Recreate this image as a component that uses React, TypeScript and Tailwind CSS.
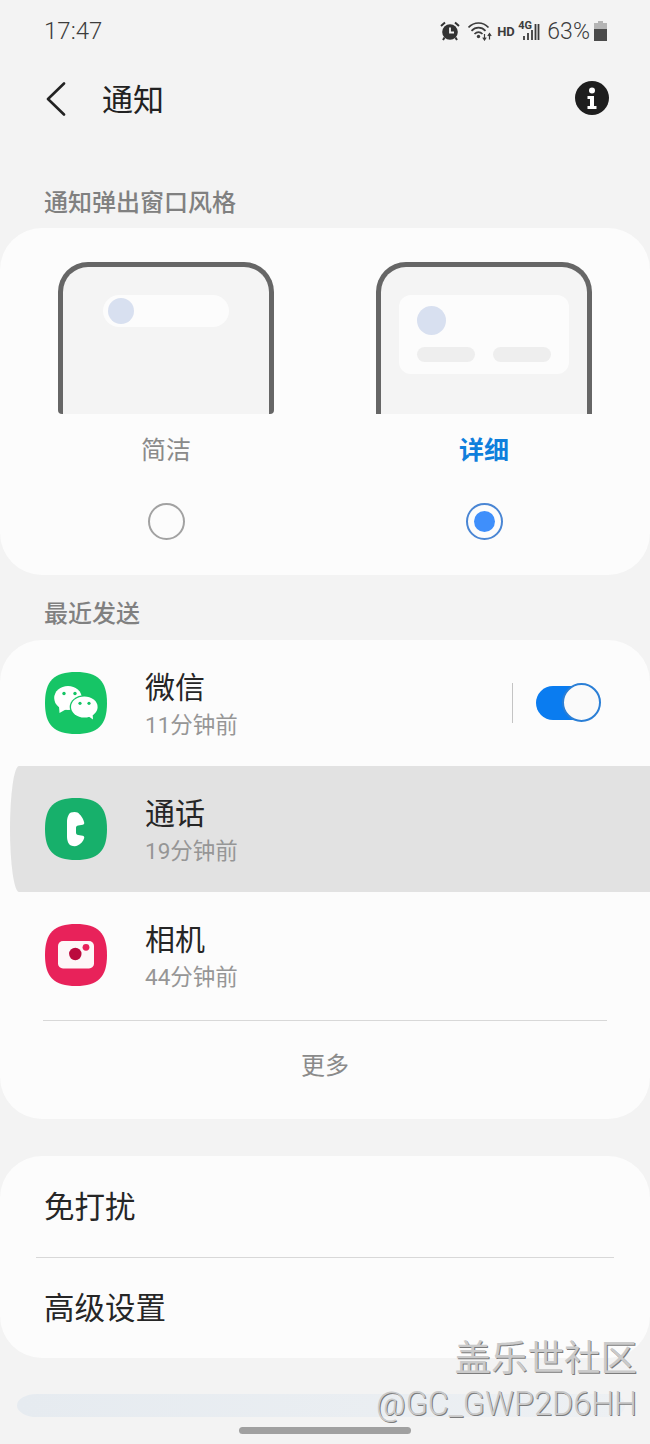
import React from "react";

const CJK = "font-['Noto_Sans_CJK_SC','Noto_Sans',sans-serif]";

const squircle = "M31 0C53 0 62 9 62 31C62 53 53 62 31 62C9 62 0 53 0 31C0 9 9 0 31 0Z";

function WeChatIcon() {
  return (
    <svg width="62" height="62" viewBox="0 0 62 62" className="shrink-0">
      <path d={squircle} fill="#16c566" />
      <ellipse cx="23" cy="26" rx="13.8" ry="12" fill="#fff" />
      <path d="M14 34l0.5 7 7-4z" fill="#fff" />
      <circle cx="19" cy="21.5" r="1.7" fill="#16c566" />
      <circle cx="30" cy="21.5" r="1.7" fill="#16c566" />
      <ellipse cx="39.3" cy="35" rx="14.6" ry="11.8" fill="#16c566" />
      <ellipse cx="39.3" cy="35" rx="13.3" ry="10.5" fill="#fff" />
      <path d="M43 44l5 3.5-0.5-6.5z" fill="#fff" />
      <circle cx="35" cy="31.3" r="1.6" fill="#16c566" />
      <circle cx="44" cy="31.3" r="1.6" fill="#16c566" />
    </svg>
  );
}

function PhoneIcon() {
  return (
    <svg width="62" height="62" viewBox="0 0 62 62" className="shrink-0">
      <path d={squircle} fill="#17b06b" />
      <path
        d="M26 14.4C28 13.8 31 13.6 32.5 14.5C35.5 16.5 38.6 21 39.2 24.5C39.4 25.9 38.8 26.6 37.7 26.8L33.2 27.5C31.8 27.8 31 28.6 31 30V34.5C31 36 31.8 36.8 33.2 37L37.7 37.8C38.8 38 39.4 38.7 39.2 40C38.6 43.2 35.5 46 32.5 47.6C31 48.4 28 48.2 26 47.6C23.4 46.6 22 42.5 22 38.5V24C22 20 23.4 15.4 26 14.4Z"
        fill="#fff"
      />
    </svg>
  );
}

function CameraIcon() {
  return (
    <svg width="62" height="62" viewBox="0 0 62 62" className="shrink-0">
      <path d={squircle} fill="#e8225a" />
      <rect x="13" y="17" width="36" height="27.5" rx="5" fill="#fdf7f8" />
      <circle cx="30.3" cy="30" r="6.2" fill="#bb0a3e" />
      <circle cx="41" cy="23.3" r="3.4" fill="#e8225a" />
    </svg>
  );
}

function StatusIcons() {
  return (
    <div className="flex items-center text-[#3c3c3c]">
      <svg width="20" height="20" viewBox="0 0 20 20" className="mr-[8px]">
        <circle cx="10" cy="11" r="7.8" fill="#333" />
        <path d="M10 6.5V11.5H14" stroke="#f3f3f3" strokeWidth="1.8" fill="none" />
        <path d="M1 5L5 1.5M19 5L15 1.5" stroke="#333" strokeWidth="2" />
        <path d="M4.5 16.5L3 19M15.5 16.5L17 19" stroke="#333" strokeWidth="2" />
      </svg>
      <svg width="24" height="20" viewBox="0 0 24 20" className="mr-[5px]">
        <g fill="none" stroke="#3c3c3c" strokeWidth="1.7">
          <path d="M0.5 6.5C6 0.5 15 0.5 20.5 6.5" />
          <path d="M3.5 9.8C7.5 5.5 13.5 5.5 17.5 9.8" />
          <path d="M6.5 13C9 10.5 12 10.5 14.5 13" />
        </g>
        <circle cx="10.5" cy="15.5" r="1.7" fill="#3c3c3c" />
        <path d="M16.5 13V18.5M14.8 16.5L16.5 19L18.2 16.5M21.5 18.5V13M19.8 15L21.5 12.5L23.2 15" stroke="#3c3c3c" strokeWidth="1.2" fill="none" />
      </svg>
      <span className="font-['Roboto',sans-serif] text-[13px] font-bold leading-none mr-[4px] w-[17px]">HD</span>
      <div className="relative w-[22px] h-[20px] mr-[7px]">
        <span className="absolute left-0 -top-[1px] font-['Roboto',sans-serif] text-[11px] font-bold leading-[11px]">4G</span>
        <svg width="22" height="20" viewBox="0 0 22 20" className="absolute left-0 top-0">
          <path d="M6 15v4M10 12v7M14 9v10M17.5 3v16M20.5 3v16" stroke="#3c3c3c" strokeWidth="1.8" />
        </svg>
      </div>
      <span className="font-['Roboto',sans-serif] text-[23px] leading-none tracking-[0.1px] font-light mr-[4px]">63%</span>
      <svg width="13" height="20" viewBox="0 0 13 20">
        <path d="M4 0H9V2H13V8H0V2H4Z" fill="#b4b4b4" />
        <rect x="0" y="8" width="13" height="12" fill="#4a4a4a" />
      </svg>
    </div>
  );
}

function AppRow({
  icon,
  title,
  sub,
  active,
  children,
}: {
  icon: React.ReactNode;
  title: string;
  sub: string;
  active?: boolean;
  children?: React.ReactNode;
}) {
  return (
    <div
      className={
        active
          ? "flex h-[126px] items-center ml-[10px] pl-[35px] bg-[#e2e2e2] [border-top-left-radius:9px_63px] [border-bottom-left-radius:9px_63px]"
          : "flex h-[126px] items-center pl-[45px]"
      }
    >
      {icon}
      <div className="ml-[38px] flex flex-col pt-[2px]">
        <span className="text-[30px] leading-[40px] -mt-[3px] text-[#262626]">{title}</span>
        <span className="text-[22.5px] leading-[30px] mt-[5px] text-[#969696] font-['Roboto','Noto_Sans_CJK_SC',sans-serif]">{sub}</span>
      </div>
      {children}
    </div>
  );
}

export default function App() {
  return (
    <div className={`relative w-[650px] h-[1444px] overflow-hidden bg-[#f3f3f3] ${CJK}`}>
      {/* status bar */}
      <div className="h-[62px] flex items-center justify-between pl-[44px] pr-[43px]">
        <span className="font-['Roboto',sans-serif] text-[24px] leading-none text-[#3c3c3c] font-light">17:47</span>
        <StatusIcons />
      </div>

      {/* header */}
      <div className="h-[76px] flex items-center pl-[46px] pr-[41px]">
        <svg width="20" height="34" viewBox="0 0 20 34" fill="none" className="-mt-[3px]">
          <path d="M18 1.5L2 17L18 32.5" stroke="#222" strokeWidth="2.6" strokeLinecap="round" strokeLinejoin="round" />
        </svg>
        <span className="ml-[36px] -mt-[4px] text-[31px] leading-[40px] text-[#222]">通知</span>
        <div className="ml-auto -mt-[4px] w-[34px] h-[34px] rounded-full bg-[#1e1e1e] flex items-center justify-center">
          <svg width="12" height="24" viewBox="0 0 12 24">
            <circle cx="6" cy="4.5" r="3" fill="#fff" />
            <path d="M1.5 10H8V20H10.5V23H1.5V20H4V13H1.5Z" fill="#fff" />
          </svg>
        </div>
      </div>

      {/* section: popup style */}
      <div className="mt-[47px] ml-[44px] h-[34px] text-[24px] leading-[32px] font-medium text-[#808080]">通知弹出窗口风格</div>
      <div className="mt-[9px] h-[347px] rounded-[42px] bg-[#fcfcfc] pt-[34px] px-[58px] flex justify-between">
        <div className="w-[216px] flex flex-col items-center">
          <div className="w-full h-[152px] border-[5px] border-b-0 border-[#666666] rounded-t-[30px] rounded-b-[4px] bg-[#f4f4f4] pt-[28px] pl-[40px]">
            <div className="w-[126px] h-[32px] rounded-full bg-[#fcfcfc] pl-[5px] flex items-center">
              <div className="w-[26px] h-[26px] rounded-full bg-[#d8e0f0]" />
            </div>
          </div>
          <div className="mt-[16px] h-[36px] text-[25px] leading-[36px] text-[#8a8a8a]">简洁</div>
          <div className="mt-[37px] w-[37px] h-[37px] rounded-full border-2 border-[#a2a2a2]" />
        </div>
        <div className="w-[216px] flex flex-col items-center">
          <div className="w-full h-[152px] border-[5px] border-b-0 border-[#666666] rounded-t-[30px] bg-[#f4f4f4] pt-[28px] pl-[18px]">
            <div className="w-[170px] h-[79px] rounded-[12px] bg-[#fcfcfc] pt-[11px] px-[18px]">
              <div className="w-[29px] h-[29px] rounded-full bg-[#d8e0f0]" />
              <div className="mt-[12px] flex justify-between">
                <div className="w-[58px] h-[15px] rounded-full bg-[#eeeeee]" />
                <div className="w-[58px] h-[15px] rounded-full bg-[#eeeeee]" />
              </div>
            </div>
          </div>
          <div className="mt-[16px] h-[36px] text-[25px] leading-[36px] font-bold text-[#0f7fdc]">详细</div>
          <div className="mt-[37px] w-[37px] h-[37px] rounded-full border-2 border-[#4a86d4] flex items-center justify-center">
            <div className="w-[21px] h-[21px] rounded-full bg-[#3f8ffb]" />
          </div>
        </div>
      </div>

      {/* section: recent */}
      <div className="mt-[21px] ml-[44px] h-[34px] text-[24px] leading-[32px] font-medium text-[#808080]">最近发送</div>
      <div className="mt-[10px] h-[479px] rounded-[42px] bg-[#fcfcfc] overflow-hidden">
        <AppRow icon={<WeChatIcon />} title="微信" sub="11分钟前">
          <div className="ml-auto mr-[23px] w-[1px] h-[40px] bg-[#c4c4c4]" />
          <div className="relative mr-[60px] w-[54px] h-[34px] rounded-full bg-[#0a7cf0]">
            <div className="absolute -top-[3px] left-[26px] w-[39px] h-[39px] rounded-full bg-[#fafafa] border-2 border-[#2b7fd6]" />
          </div>
        </AppRow>
        <AppRow icon={<PhoneIcon />} title="通话" sub="19分钟前" active />
        <AppRow icon={<CameraIcon />} title="相机" sub="44分钟前" />
        <div className="mt-[2px] mx-[43px] h-[1px] bg-[#d8d8d8]" />
        <div className="h-[88px] pb-[2px] flex items-center justify-center text-[24px] text-[#8a8a8a]">更多</div>
      </div>

      {/* section: other */}
      <div className="mt-[37px] h-[202px] rounded-[42px] bg-[#fcfcfc] flex flex-col">
        <div className="h-[101px] pl-[44px] pb-[2px] flex items-center text-[30.5px] text-[#262626]">免打扰</div>
        <div className="mx-[36px] h-[1px] bg-[#d8d8d8]" />
        <div className="h-[100px] pl-[44px] pb-[3px] flex items-center text-[30.5px] text-[#262626]">高级设置</div>
      </div>

      {/* next card peek and gesture bar */}
      <div className="mt-[36px] ml-[17px] mr-[25px] h-[23px] rounded-[16px/11.5px] bg-linear-to-r from-[#e6ebf0] to-[#edf0f3] [border-top-left-radius:20px_11.5px] [border-bottom-left-radius:20px_11.5px]" />
      <div className="mt-[10px] mx-auto w-[172px] h-[7px] rounded-full bg-[#a0a0a0]" />

      {/* watermark */}
      <div className="absolute right-[13px] top-[1333px] flex flex-col items-end font-['Noto_Sans_CJK_SC',sans-serif] text-[#cacaca] [text-shadow:1px_1px_0_#7c7c7c]">
        <span className="text-[36.5px] leading-[46px]">盖乐世社区</span>
        <span className="mt-[4px] font-['Roboto',sans-serif] text-[32.4px] leading-[42px] font-light">@GC_GWP2D6HH</span>
      </div>
    </div>
  );
}
